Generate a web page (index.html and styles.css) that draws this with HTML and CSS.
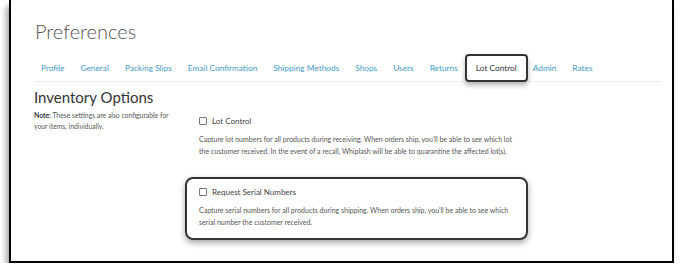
FILE: index.html
```html
<!DOCTYPE html>
<html lang="en">
  <head>
    <meta charset="UTF-8" />
    <title>Preferences</title>
    <link rel="stylesheet" href="styles.css">
  </head>
  <body>
    <div class="frame">
      <h1 class="title">Preferences</h1>
      <ul class="tabs">
        <li>Profile</li>
        <li>General</li>
        <li>Packing Slips</li>
        <li>Email Confirmation</li>
        <li>Shipping Methods</li>
        <li>Shops</li>
        <li>Users</li>
        <li>Returns</li>
        <li class="active">Lot Control</li>
        <li>Admin</li>
        <li>Rates</li>
      </ul>
      <div class="section">
        <div class="side">
          <h2>Inventory Options</h2>
          <p class="note"><b>Note:</b> <span>These settings are also configurable for</span><br><span>your items, individually.</span></p>
        </div>
        <div class="options">
          <div class="option">
            <label><span class="box"></span>Lot Control</label>
            <p>Capture lot numbers for all products during receiving. When orders ship, you'll be able to see which lot the customer received. In the event of a recall, Whiplash will be able to quarantine the affected lot(s).</p>
          </div>
          <div class="option highlight">
            <label><span class="box"></span>Request Serial Numbers</label>
            <p>Capture serial numbers for all products during shipping. When orders ship, you'll be able to see which serial number the customer received.</p>
          </div>
        </div>
      </div>
    </div>
  </body>
</html>
```

FILE: styles.css
```css
body {
  margin: 0;
  background: #fff;
  font-family: Lato, "Open Sans", sans-serif;
  color: #555;
}
.frame {
  margin-left: 9px;
  width: 628px;
  height: 261px;
  border: 2px solid #000;
  border-top: none;
  box-shadow: -3px 6px 6px rgba(0, 0, 0, 0.35);
  padding: 0 10px 0 23px;
  overflow: hidden;
}
.title {
  margin: 18px 0 0 1px;
  font-size: 20px;
  font-weight: 300;
  color: #555;
  line-height: 26px;
}
.tabs {
  list-style: none;
  display: flex;
  margin: 11px 0 0;
  padding: 0 0 0 7px;
  border-bottom: 1px solid #eee;
  height: 26px;
  align-items: center;
}
.tabs li {
  font-size: 8.3px;
  color: #3f9bc4;
  margin-right: 16px;
}
.tabs li.active {
  color: #333;
  border: 2px solid #333;
  border-radius: 4px;
  padding: 7px 9px;
  margin: 0 5px 0 -9px;
  box-shadow: 0 3px 5px rgba(0, 0, 0, 0.3);
}
.section {
  display: flex;
  margin-top: 7px;
}
.side {
  width: 165px;
}
.side h2 {
  margin: 0;
  font-size: 15px;
  font-weight: 400;
  color: #333;
  line-height: 17px;
}
.note {
  margin: 4px 0 0;
  font-size: 6.8px;
  line-height: 11px;
  color: #555;
  width: 150px;
}
.note b {
  color: #333;
}
.options {
  display: flex;
  flex-direction: column;
  padding-top: 27px;
}
.option {
  width: 318px;
}
.option label {
  display: flex;
  align-items: center;
  font-size: 8px;
  color: #444;
}
.box {
  width: 6px;
  height: 6px;
  border: 1px solid #777;
  border-radius: 1px;
  margin-right: 5px;
}
.option p {
  margin: 7px 0 0;
  font-size: 7px;
  line-height: 12px;
}
.highlight {
  margin: 20px 0 0 -14px;
  padding: 8px 12px 10px 12px;
  border: 2px solid #333;
  border-radius: 8px;
  box-shadow: 0 3px 6px rgba(0, 0, 0, 0.35);
  width: 315px;
}
```
